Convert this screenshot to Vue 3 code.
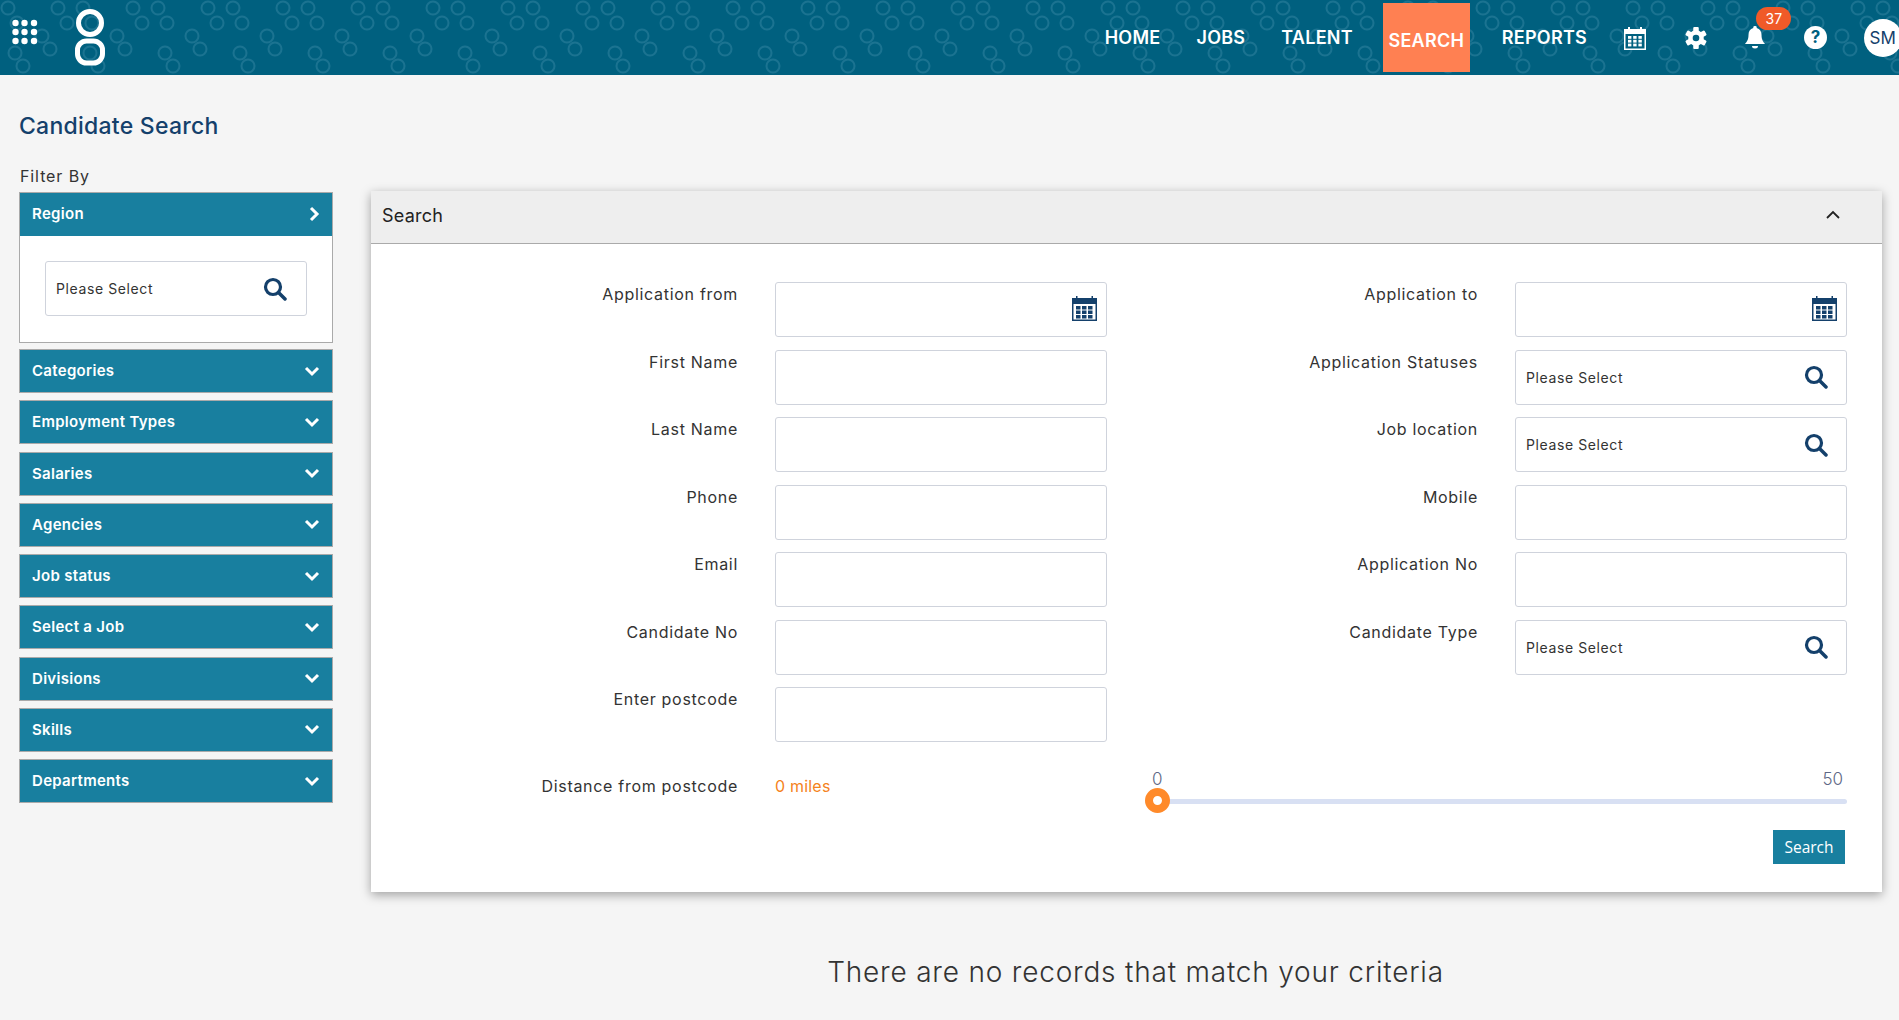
<template>
  <div class="page">
    <header class="topbar">
      <svg class="pattern" width="100%" height="75" aria-hidden="true">
        <defs>
          <pattern id="rings" width="75" height="75" patternUnits="userSpaceOnUse">
            <g fill="none" stroke="#1b7391" stroke-width="2">
              <circle v-for="r in rings" :key="r[0] + '-' + r[1]" :cx="r[0]" :cy="r[1]" r="6.5" />
            </g>
          </pattern>
        </defs>
        <rect width="100%" height="75" fill="url(#rings)" />
      </svg>

      <div class="brand">
        <svg class="apps" width="26" height="26" viewBox="0 0 26 26">
          <g fill="#fff">
            <template v-for="y in [4, 13, 22]" :key="y">
              <circle v-for="x in [3.500, 12.500, 22]" :key="x" :cx="x" :cy="y" r="3.2" />
            </template>
          </g>
        </svg>
        <svg class="logo" width="32" height="58" viewBox="0 0 32 58">
          <g fill="none" stroke="#fff" stroke-width="5">
            <circle cx="16" cy="14" r="11.500" />
            <rect x="3.500" y="32" width="25" height="22" rx="9" />
          </g>
        </svg>
      </div>

      <nav class="nav">
        <a v-for="item in navItems" :key="item" class="nav-link" :class="{ active: item === 'SEARCH' }">{{ item }}</a>
      </nav>

      <div class="tools">
        <svg width="22" height="24" viewBox="0 0 22 24">
          <path fill="#fff" d="M0 3h4V1h2v2h10V1h2v2h4v21H0z" />
          <rect x="1.500" y="8" width="19" height="14.500" fill="#00607f" />
          <g fill="#fff">
            <template v-for="y in [10, 13.800, 17.600]" :key="y">
              <rect v-for="x in [4, 9.200, 14.400]" :key="x" :x="x" :y="y" width="3.400" height="2.800" />
            </template>
          </g>
        </svg>
        <svg width="22" height="24" viewBox="-12 -12 24 24">
          <g fill="#fff">
            <rect v-for="a in [0, 60, 120, 180, 240, 300]" :key="a" x="-3" y="-12" width="6" height="6" rx="1.200" :transform="`rotate(${a})`" />
            <circle r="8.500" />
          </g>
          <circle r="3.600" fill="#00607f" />
        </svg>
        <div class="bell">
          <span class="badge">37</span>
          <svg width="20" height="24" viewBox="0 0 20 24">
            <path fill="#fff" d="M10 0a1.700 1.700 0 0 1 1.700 2C15 2.800 16.500 5.500 16.500 9c0 4.500 1.500 6.500 3.500 9H0c2-2.500 3.500-4.500 3.500-9 0-3.500 1.500-6.200 4.800-7A1.700 1.700 0 0 1 10 0z" />
            <path fill="#fff" d="M7 20h6a3 2.500 0 0 1-6 0z" />
          </svg>
        </div>
        <span class="help">?</span>
        <span class="avatar">SM</span>
      </div>
    </header>

    <h1 class="title">Candidate Search</h1>

    <main class="content">
      <aside class="filters">
        <div class="filter-label">Filter By</div>
        <section class="filter filter-open">
          <div class="filter-head">
            Region
            <svg width="12" height="16" viewBox="0 0 12 16">
              <path d="M3 2l6 6-6 6" fill="none" stroke="#fff" stroke-width="3" />
            </svg>
          </div>
          <div class="filter-body">
            <div class="field select side-select">
              <span>Please Select</span>
              <svg class="lens" width="24" height="24" viewBox="0 0 24 24">
                <circle cx="10" cy="10" r="7.500" fill="none" stroke="#14406b" stroke-width="3.200" />
                <path d="M15.500 15.500L22 22" stroke="#14406b" stroke-width="3.500" stroke-linecap="round" />
              </svg>
            </div>
          </div>
        </section>
        <section v-for="name in filters" :key="name" class="filter">
          <div class="filter-head">
            {{ name }}
            <svg width="16" height="12" viewBox="0 0 16 12">
              <path d="M2 3l6 6 6-6" fill="none" stroke="#fff" stroke-width="3" />
            </svg>
          </div>
        </section>
      </aside>

      <section class="panel">
        <div class="panel-head">
          <span>Search</span>
          <svg width="16" height="10" viewBox="0 0 16 10">
            <path d="M2 8l6-6 6 6" fill="none" stroke="#222" stroke-width="1.800" />
          </svg>
        </div>

        <div class="form">
          <template v-for="f in fields" :key="f.label">
            <label class="form-label">{{ f.label }}</label>
            <div v-if="f.type" class="field" :class="{ select: f.type === 'select' }">
              <span v-if="f.type === 'select'">Please Select</span>
              <svg v-if="f.type === 'select'" class="lens" width="24" height="24" viewBox="0 0 24 24">
                <circle cx="10" cy="10" r="7.500" fill="none" stroke="#14406b" stroke-width="3.200" />
                <path d="M15.500 15.500L22 22" stroke="#14406b" stroke-width="3.500" stroke-linecap="round" />
              </svg>
              <svg v-if="f.type === 'date'" class="cal" width="25" height="25" viewBox="0 0 25 25">
                <path fill="#14406b" d="M0 2h4V0h1.500v2h14V0H21v2h4v23H0z" />
                <rect x="1.500" y="8" width="22" height="15.500" fill="#fff" />
                <g fill="#14406b">
                  <template v-for="y in [10, 14.500, 19]" :key="y">
                    <rect v-for="x in [4, 10, 16]" :key="x" :x="x" :y="y" width="4.500" height="3.500" />
                  </template>
                </g>
              </svg>
            </div>
            <div v-else></div>
          </template>

          <label class="form-label distance">Distance from postcode</label>
          <div class="miles distance">0 miles</div>
          <div class="slider distance">
            <span class="tick tick-min">0</span>
            <span class="tick tick-max">50</span>
            <div class="track"></div>
            <div class="thumb"></div>
          </div>
        </div>

        <div class="actions">
          <button class="search-btn">Search</button>
        </div>
      </section>
    </main>

    <p class="empty">There are no records that match your criteria</p>
  </div>
</template>

<script setup>
const rings = [
  [8, 8], [17, 23], [58, 8], [67, 23],
  [42, 36], [50, 49], [15, 53], [23, 66]
]

const navItems = ['HOME', 'JOBS', 'TALENT', 'SEARCH', 'REPORTS']

const filters = [
  'Categories', 'Employment Types', 'Salaries', 'Agencies', 'Job status',
  'Select a Job', 'Divisions', 'Skills', 'Departments'
]

const fields = [
  { label: 'Application from', type: 'date' },
  { label: 'Application to', type: 'date' },
  { label: 'First Name', type: 'text' },
  { label: 'Application Statuses', type: 'select' },
  { label: 'Last Name', type: 'text' },
  { label: 'Job location', type: 'select' },
  { label: 'Phone', type: 'text' },
  { label: 'Mobile', type: 'text' },
  { label: 'Email', type: 'text' },
  { label: 'Application No', type: 'text' },
  { label: 'Candidate No', type: 'text' },
  { label: 'Candidate Type', type: 'select' },
  { label: 'Enter postcode', type: 'text' },
  { label: '', type: '' }
]
</script>

<style scoped>
.page {
  width: 1899px;
  height: 1020px;
  overflow: hidden;
  background: #f5f5f5;
  font-family: Inter, "Open Sans", sans-serif;
  letter-spacing: 0.6px;
  color: #333;
}

.topbar {
  position: relative;
  height: 75px;
  display: flex;
  align-items: center;
  background: #00607f;
  color: #fff;
}

.pattern {
  position: absolute;
  inset: 0;
}

.brand {
  position: relative;
  display: flex;
  align-items: center;
  gap: 36px;
  padding-left: 12px;
}

.apps {
  margin-bottom: 11px;
}

.nav {
  position: relative;
  display: flex;
  align-items: center;
  margin-left: auto;
  height: 69px;
}

.nav-link {
  font-size: 18px;
  font-weight: 600;
  letter-spacing: 0.25px;
  padding: 0 18px;
}

.nav-link.active {
  height: 69px;
  width: 87px;
  margin: 0 14px 0 12px;
  padding: 5px 0 0;
  display: flex;
  align-items: center;
  justify-content: center;
  box-sizing: border-box;
  background: #ff8052;
}

.tools {
  position: relative;
  display: flex;
  align-items: center;
  gap: 38.700px;
  margin-left: 19px;
  width: 275px;
  flex: none;
}

.tools > * {
  flex: none;
}

.tools svg {
  display: block;
}

.bell {
  position: relative;
}

.badge {
  position: absolute;
  left: 11px;
  top: -19px;
  width: 35px;
  height: 23px;
  border-radius: 12px;
  background: #f05a28;
  color: #fff;
  font-size: 14px;
  letter-spacing: 0;
  line-height: 23px;
  text-align: center;
}

.help {
  width: 23px;
  height: 23px;
  border-radius: 50%;
  background: #fff;
  color: #00607f;
  font-size: 17px;
  font-weight: 700;
  letter-spacing: 0;
  line-height: 23px;
  text-align: center;
}

.avatar {
  width: 38px;
  height: 38px;
  margin-left: -2px;
  border-radius: 50%;
  background: #fff;
  color: #14406b;
  font-size: 17px;
  letter-spacing: 0;
  line-height: 38px;
  text-align: center;
}

.title {
  margin: 0;
  padding: 37px 0 0 19px;
  height: 56px;
  font-size: 23px;
  font-weight: 500;
  letter-spacing: 0.25px;
  line-height: 28px;
  color: #14406b;
}

.content {
  display: flex;
  align-items: flex-start;
  padding-left: 19px;
}

.filters {
  width: 314px;
  flex: none;
}

.filter-label {
  height: 26px;
  margin-top: -2px;
  padding: 0 0 0 1px;
  font-size: 16px;
  letter-spacing: 0.9px;
  line-height: 20px;
}

.filter {
  border: 1px solid #aaa;
  margin-bottom: 7.250px;
  background: #187f9f;
}

.filter-open {
  background: #fff;
  margin-bottom: 6px;
}

.filter-head {
  height: 42px;
  box-sizing: border-box;
  display: flex;
  align-items: center;
  justify-content: space-between;
  padding: 0 12px 1px;
  background: #187f9f;
  color: #fff;
  font-size: 15px;
  font-weight: 600;
  letter-spacing: 0.3px;
}

.filter-open .filter-head {
  height: 43px;
  padding-bottom: 2px;
}

.filter-body {
  padding: 25px 25px 26px 25px;
}

.side-select {
  height: 54px;
}

.form {
  display: grid;
  grid-template-columns: 366px 332px 332px 332px;
  grid-auto-rows: 55px;
  column-gap: 38px;
  row-gap: 12.500px;
  padding-top: 38px;
}

.form-label {
  margin-right: -1px;
  font-size: 16px;
  font-weight: 400;
  letter-spacing: 0.7px;
  line-height: 24px;
  text-align: right;
  color: #333;
}

.field {
  height: 55px;
  box-sizing: border-box;
  border: 1px solid #cfd3dc;
  border-radius: 3px;
  background: #fff;
  display: flex;
  align-items: center;
  justify-content: flex-end;
}

.field.select {
  justify-content: space-between;
  padding: 0 18px 0 10px;
  font-size: 14px;
  color: #333;
}

.field.side-select {
  padding-right: 19px;
}

.cal {
  margin: 0 9px 2px 0;
}

.lens {
  flex: none;
}

.panel {
  width: 1511px;
  height: 701px;
  margin: 23px 0 0 38px;
  background: #fff;
  box-shadow: 0 3px 10px rgba(0, 0, 0, 0.35);
}

.panel-head {
  height: 48px;
  padding: 0 41px 4px 11px;
  display: flex;
  align-items: center;
  justify-content: space-between;
  background: #eee;
  border-bottom: 1px solid #aaa;
  font-size: 18px;
  letter-spacing: 0.25px;
  color: #222;
}

.distance {
  margin-top: 18px;
}

.form-label.distance {
  padding-top: 1px;
}

.miles {
  padding-top: 1px;
  font-size: 16px;
  letter-spacing: 0.2px;
  line-height: 24px;
  color: #f58220;
}

.slider {
  position: relative;
  grid-column: 3 / span 2;
}

.track {
  position: absolute;
  left: 0;
  right: 0;
  top: 26px;
  height: 5px;
  border-radius: 3px;
  background: #d8e0f3;
}

.thumb {
  position: absolute;
  left: 0;
  top: 15px;
  width: 25px;
  height: 25px;
  box-sizing: border-box;
  border: 8px solid #ff8a2a;
  border-radius: 50%;
  background: #fff;
}

.tick {
  position: absolute;
  top: -4px;
  font-size: 17px;
  font-weight: 300;
  line-height: 20px;
  color: #5d6785;
  letter-spacing: 0;
}

.tick-min {
  left: 7px;
}

.tick-max {
  right: 4px;
}

.actions {
  display: flex;
  justify-content: flex-end;
  padding: 0 37px 0 0;
  margin-top: 20px;
}

.search-btn {
  width: 72px;
  height: 34px;
  border: 0;
  padding: 0;
  background: #187f9f;
  color: #fff;
  font-family: "Open Sans", sans-serif;
  font-size: 15.500px;
  letter-spacing: 0;
}

.empty {
  margin: 63px 0 0 383px;
  width: 1505px;
  font-size: 28px;
  font-weight: 300;
  letter-spacing: 0.8px;
  line-height: 34px;
  text-align: center;
  color: #333;
}
</style>

<style>
html,
body {
  margin: 0;
}
</style>
